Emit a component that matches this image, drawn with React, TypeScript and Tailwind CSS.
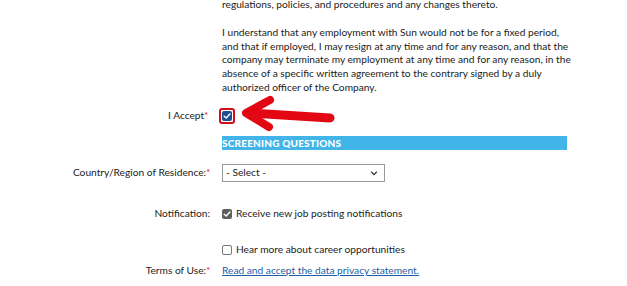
import React from "react"

const font = { fontFamily: "Lato, 'Liberation Sans', sans-serif" }

function Row({ label, required, children, className }: { label?: string; required?: boolean; children?: React.ReactNode; className?: string }) {
  return (
    <div className={`flex items-center whitespace-nowrap ${className ?? ""}`}>
      <div className="w-[210px] shrink-0 text-right">
        {label}
        {required && <span className="text-[#d0021b] text-[9px] align-text-top">*</span>}
      </div>
      <div className="ml-3 flex items-center">{children}</div>
    </div>
  )
}

function Check() {
  return (
    <svg viewBox="0 0 10 10" className="w-[8px] h-[8px]">
      <path d="M1.5 5.2 L4 7.6 L8.6 2.4" fill="none" stroke="white" strokeWidth="1.8" strokeLinecap="round" strokeLinejoin="round" />
    </svg>
  )
}

export default function App() {
  return (
    <div className="relative w-[627px] h-[286px] overflow-hidden bg-white text-[10.2px] text-[#222]" style={font}>
      <div className="flex flex-col">
        <div className="ml-[222px] w-[360px] leading-[13.8px] mt-[-2px] whitespace-nowrap">
          <p>regulations, policies, and procedures and any changes thereto.</p>
          <p className="mt-[14px]">
            I understand that any employment with Sun would not be for a fixed period,
            <br />
            and that if employed, I may resign at any time and for any reason, and that the
            <br />
            company may terminate my employment at any time and for any reason, in the
            <br />
            absence of a specific written agreement to the contrary signed by a duly
            <br />
            authorized officer of the Company.
          </p>
        </div>

        <Row label="I Accept" required className="mt-[13px] h-[16px] ml-[-2px]">
          <span className="w-[16px] h-[16px] rounded-[3px] border-2 border-[#d40f1c] flex items-center justify-center ml-[-1px]">
            <span className="w-[10px] h-[10px] rounded-[2px] bg-[#1d4f8f] flex items-center justify-center">
              <Check />
            </span>
          </span>
        </Row>

        <div className="ml-[222px] mt-[12px] w-[345px] h-[14px] bg-[#41b4e8] text-white font-black text-[10px] leading-[14px] tracking-[0.2px]">
          SCREENING QUESTIONS
        </div>

        <Row label="Country/Region of Residence:" required className="mt-[14px] h-[18px]">
          <div className="w-[163px] h-[18px] border border-[#9a9a9a] flex items-center justify-between pl-[3px] pr-[6px]">
            <span>- Select -</span>
            <svg viewBox="0 0 10 10" className="w-[8px] h-[8px]">
              <path d="M1.5 3.5 L5 7 L8.5 3.5" fill="none" stroke="#333" strokeWidth="1.6" />
            </svg>
          </div>
        </Row>

        <Row label="Notification:" className="mt-[25px] h-[14px]">
          <span className="w-[10px] h-[10px] rounded-[2px] bg-[#5f5f5f] flex items-center justify-center">
            <Check />
          </span>
          <span className="ml-[4px]">Receive new job posting notifications</span>
        </Row>

        <Row className="mt-[22px] h-[14px]">
          <span className="w-[10px] h-[10px] rounded-[2px] border border-[#777] bg-white" />
          <span className="ml-[4px]">Hear more about career opportunities</span>
        </Row>

        <Row label="Terms of Use:" required className="mt-[7px] h-[14px]">
          <a className="text-[#1c5ea6] underline">Read and accept the data privacy statement.</a>
        </Row>
      </div>

      <svg className="absolute left-0 top-0 pointer-events-none" width="627" height="286">
        <g stroke="#e30613" strokeLinecap="round" strokeLinejoin="round" fill="none">
          <polyline points="270,100 246,113 269,127" strokeWidth="8" />
          <line x1="250" y1="113" x2="330" y2="118" strokeWidth="9" />
        </g>
      </svg>
    </div>
  )
}
